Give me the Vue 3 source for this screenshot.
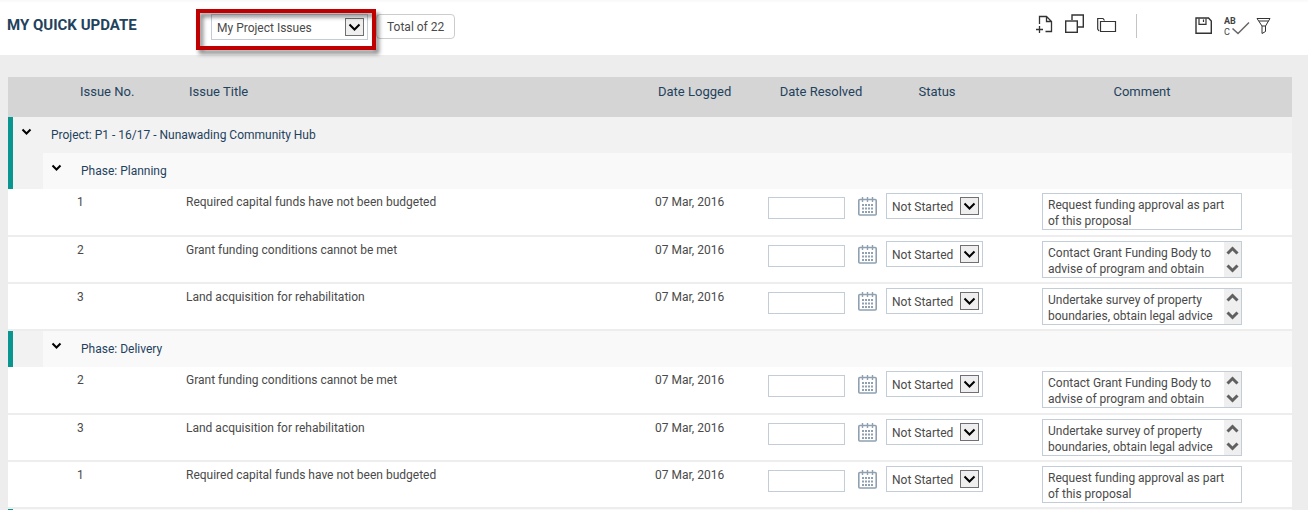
<script setup>
import { reactive, ref } from 'vue'

const view = ref('My Project Issues')

const comments = {
  request: 'Request funding approval as part of this proposal',
  contact: 'Contact Grant Funding Body to advise of program and obtain',
  survey: 'Undertake survey of property boundaries, obtain legal advice',
}

const makeIssue = (id, no, title, comment, scroll) => ({
  id, no, title, logged: '07 Mar, 2016', resolved: '', status: 'Not Started', comment, scroll,
})

const phases = reactive([
  {
    name: 'Planning',
    open: true,
    issues: [
      makeIssue('p1', 1, 'Required capital funds have not been budgeted', comments.request, false),
      makeIssue('p2', 2, 'Grant funding conditions cannot be met', comments.contact, true),
      makeIssue('p3', 3, 'Land acquisition for rehabilitation', comments.survey, true),
    ],
  },
  {
    name: 'Delivery',
    open: true,
    issues: [
      makeIssue('d2', 2, 'Grant funding conditions cannot be met', comments.contact, true),
      makeIssue('d3', 3, 'Land acquisition for rehabilitation', comments.survey, true),
      makeIssue('d1', 1, 'Required capital funds have not been budgeted', comments.request, false),
    ],
  },
])
</script>

<template>
  <div class="page">
    <header class="bar">
      <h1>MY QUICK UPDATE</h1>
      <div class="highlight">
        <div class="picker wide">
          <select v-model="view" aria-label="View">
            <option>My Project Issues</option>
          </select>
          <svg class="drop" viewBox="0 0 17 16"><path d="M3.5 5.5L8.5 10.5L13.5 5.5" /></svg>
        </div>
      </div>
      <span class="total">Total of 22</span>

      <div class="tools">
        <button type="button" class="new" aria-label="New">
          <svg width="18" height="20" viewBox="0 0 18 20">
            <path d="M3.500 9V1.500H10.500L15.500 6.500V16.500H9.500M10.500 1.500V6.500H15.500" stroke-width="1.300" />
            <path d="M0 14.500H7M3.500 11V18" stroke-width="1.300" />
          </svg>
        </button>
        <button type="button" class="copy" aria-label="Copy">
          <svg width="20" height="20" viewBox="0 0 20 20">
            <path d="M7 6V1H18.300V13H13" stroke-width="1.400" />
            <rect x="0.700" y="7" width="11.600" height="11.300" stroke-width="1.400" />
          </svg>
        </button>
        <button type="button" class="folder" aria-label="Open folder">
          <svg width="20" height="16" viewBox="0 0 20 16">
            <path d="M2 14L.7 12V1.500H6L7.500 3.500M3.500 4.500H18.500V14.500H3.500Z" stroke-width="1.200" />
          </svg>
        </button>
        <span class="rule"></span>
        <button type="button" class="save" aria-label="Save">
          <svg width="18" height="18" viewBox="0 0 18 18">
            <path d="M1 1H13.500L16.300 4V16.300H1Z" stroke-width="1.400" />
            <path d="M4 1.500V7.300H11V1.500M8.500 2.500V5" stroke-width="1.200" />
          </svg>
        </button>
        <button type="button" class="spell" aria-label="Check spelling">
          <svg width="26" height="24" viewBox="0 0 26 24">
            <text x="0" y="10">AB</text>
            <text x="0" y="21" class="light">C</text>
            <path d="M8.500 14.500L14 19.500L25 8.500" stroke-width="1.500" />
          </svg>
        </button>
        <button type="button" class="filter" aria-label="Filter">
          <svg width="16" height="18" viewBox="0 0 16 18">
            <path d="M1 1.500H14L9.500 9V14.500L6 16.500V9ZM3 4H12.500M6 9H9.500" />
          </svg>
        </button>
      </div>
    </header>

    <main>
      <table>
        <colgroup>
          <col class="c-mark" /><col class="c-no" /><col /><col class="c-date" />
          <col class="c-resolved" /><col class="c-status" /><col class="c-comment" />
        </colgroup>
        <thead>
          <tr>
            <th></th>
            <th class="no">Issue No.</th>
            <th class="title">Issue Title</th>
            <th class="date">Date Logged</th>
            <th class="mid resolved-head">Date Resolved</th>
            <th class="mid status-head">Status</th>
            <th class="mid">Comment</th>
          </tr>
        </thead>
        <tbody>
          <tr class="project">
            <td class="mark">
              <button type="button" class="toggle" aria-label="Toggle project">
                <svg width="11" height="8" viewBox="0 0 11 8"><path d="M1.500 1.500L5.500 5.500L9.500 1.500" /></svg>
              </button>
            </td>
            <td colspan="6" class="project-name">Project: P1 - 16/17 - Nunawading Community Hub</td>
          </tr>
        </tbody>
        <tbody v-for="phase in phases" :key="phase.name">
          <tr class="phase">
            <td class="mark"></td>
            <td colspan="6">
              <div class="phase-line">
                <button type="button" class="toggle" :aria-label="'Toggle ' + phase.name" @click="phase.open = !phase.open">
                  <svg width="11" height="8" viewBox="0 0 11 8"><path d="M1.500 1.500L5.500 5.500L9.500 1.500" /></svg>
                </button>
                <span>Phase: {{ phase.name }}</span>
              </div>
            </td>
          </tr>
          <template v-if="phase.open">
            <tr v-for="issue in phase.issues" :key="issue.id" class="issue">
              <td></td>
              <td class="no">{{ issue.no }}</td>
              <td class="title">{{ issue.title }}</td>
              <td class="date">{{ issue.logged }}</td>
              <td class="controls">
                <div class="resolved">
                  <input v-model="issue.resolved" type="text" aria-label="Date resolved" />
                  <button type="button" aria-label="Pick a date">
                    <svg width="19" height="19" viewBox="0 0 19 19" class="calendar">
                      <rect x="0.800" y="2.500" width="17.400" height="15.500" rx="1" stroke-width="1.600" />
                      <path d="M4.500 0V5M9.500 0V5M14.500 0V5" stroke-width="1.400" />
                      <path d="M4 8H15M4 11.500H15M4 15H15" stroke-width="2" stroke-dasharray="2 1" />
                    </svg>
                  </button>
                </div>
              </td>
              <td class="controls status">
                <div class="picker">
                  <select v-model="issue.status" aria-label="Status">
                    <option>Not Started</option>
                  </select>
                  <svg class="drop" viewBox="0 0 17 16"><path d="M3.5 5.5L8.5 10.5L13.5 5.5" /></svg>
                </div>
              </td>
              <td class="controls">
                <div class="comment" :class="{ scroll: issue.scroll }">
                  <textarea v-model="issue.comment" aria-label="Comment"></textarea>
                  <div v-if="issue.scroll" class="scroller">
                    <svg width="13" height="9" viewBox="0 0 13 9"><path d="M1.500 7.500L6.500 2.500L11.500 7.500" /></svg>
                    <svg width="13" height="9" viewBox="0 0 13 9"><path d="M1.500 1.500L6.500 6.500L11.500 1.500" /></svg>
                  </div>
                </div>
              </td>
            </tr>
          </template>
        </tbody>
        <tbody>
          <tr class="next"><td class="mark"></td><td colspan="6"></td></tr>
        </tbody>
      </table>
    </main>
  </div>
</template>

<style>
html,
body {
  margin: 0;
  background: #ededed;
}
</style>

<style scoped>
.page {
  font: 12px/16px Roboto, "Liberation Sans", sans-serif;
  color: #4a4a4a;
}
.page * {
  box-sizing: border-box;
}
button {
  padding: 0;
  border: 0;
  background: none;
  display: block;
  cursor: pointer;
}
svg {
  display: block;
  fill: none;
  stroke: #333;
}
.bar {
  display: flex;
  align-items: flex-start;
  height: 55px;
  padding-left: 7px;
  background: linear-gradient(#f8f8f8, #fff 3px);
}
h1 {
  width: 189px;
  margin: 16px 0 0;
  font-size: 15px;
  line-height: 18px;
  font-weight: 700;
  color: #1f425d;
  white-space: nowrap;
}
.highlight {
  position: relative;
  width: 180px;
  margin-top: 9px;
  padding: 5px 8px 10px 15px;
}
.highlight::after {
  content: "";
  position: absolute;
  inset: 0;
  border: 4px solid #c00000;
  filter: drop-shadow(3px 4px 2px rgba(0, 0, 0, 0.5));
  pointer-events: none;
}
.picker {
  position: relative;
  width: 97px;
  height: 26px;
}
.picker.wide {
  width: auto;
}
.picker select {
  appearance: none;
  display: block;
  width: 100%;
  height: 100%;
  padding: 1px 0 0 5px;
  border: 1px solid #c3cdd8;
  border-radius: 0;
  background: #fff;
  font: inherit;
  color: inherit;
}
.drop {
  position: absolute;
  right: 4px;
  top: 4px;
  width: 19px;
  height: 18px;
  background: #efefef;
  border: 1px solid #707070;
  stroke: #000;
  stroke-width: 2;
  pointer-events: none;
}
.total {
  height: 25px;
  margin-top: 14px;
  padding: 0 10px;
  border: 1px solid #ccc;
  border-radius: 4px;
  line-height: 24px;
}
.tools {
  display: flex;
  align-items: flex-start;
  margin-left: auto;
  padding: 14px 36px 0 0;
}
.new {
  margin: 1px 11px 0 0;
}
.copy {
  margin-right: 12px;
}
.folder {
  margin: 3px 19px 0 0;
}
.rule {
  width: 1px;
  height: 24px;
  margin-right: 58px;
  background: #c4c4c4;
}
.save {
  margin: 3px 11px 0 0;
}
.spell {
  margin-right: 6px;
}
.spell text {
  font: 700 9px Roboto, "Liberation Sans", sans-serif;
  fill: #444;
  stroke: none;
}
.spell .light {
  font-weight: 400;
}
.spell path {
  stroke: #666;
}
.filter {
  margin-top: 3px;
}
main {
  padding: 22px 16px 0 8px;
}
table {
  width: 100%;
  table-layout: fixed;
  border-collapse: separate;
  border-spacing: 0;
}
.c-mark { width: 35px; }
.c-no { width: 140px; }
.c-date { width: 100px; }
.c-resolved { width: 132px; }
.c-status { width: 108px; }
.c-comment { width: 300px; }
th,
td {
  padding: 0;
  text-align: left;
  vertical-align: top;
  font-weight: 400;
}
th {
  height: 40px;
  padding-top: 7px;
  background: #d5d5d5;
  font-size: 13px;
  color: #1f425d;
}
th.no { padding-left: 37px; }
th.title,
th.date { padding-left: 6px; }
th.mid { text-align: center; }
th.resolved-head { padding-left: 6px; }
th.status-head { padding-right: 2px; }
.project td,
.phase td {
  height: 36px;
  background: #f2f2f2;
  color: #1f425d;
}
.phase td:last-child {
  background: #f9f9f9;
}
td.mark,
.phase td.mark {
  border-left: 5px solid #0a9690;
  background: #f2f2f2;
}
.mark .toggle {
  margin: 11px 0 0 8px;
}
.toggle svg {
  stroke: #000;
  stroke-width: 2;
}
.project-name {
  padding: 10px 0 0 8px;
}
.phase-line {
  display: flex;
  align-items: flex-start;
  gap: 19px;
  padding: 10px 0 0 8px;
}
.phase-line .toggle {
  margin-top: 1px;
}
.issue td {
  height: 47px;
  padding-top: 5px;
  border-bottom: 2px solid #ededed;
  background: #fff;
}
.issue td.controls {
  padding-top: 4px;
}
.issue:nth-child(2) td {
  height: 48px;
}
.issue td.no { padding-left: 34px; }
.issue td.title,
.issue td.date { padding-left: 3px; }
.resolved {
  display: flex;
  align-items: flex-start;
  gap: 13px;
  padding: 4px 0 0 16px;
}
.resolved input {
  width: 77px;
  height: 22px;
  padding: 0 4px;
  border: 1px solid #c3cdd8;
  font: inherit;
}
.calendar {
  stroke: #8fa1b1;
}
.issue td.status {
  padding-left: 2px;
}
.comment {
  position: relative;
  width: 200px;
  margin: 0 auto;
}
.comment textarea {
  display: block;
  width: 100%;
  height: 37px;
  padding: 3px 5px 0;
  border: 1px solid #c3cdd8;
  background: #fff;
  overflow: hidden;
  resize: none;
  font: inherit;
  color: inherit;
}
.scroll textarea {
  padding-right: 20px;
}
.scroller {
  position: absolute;
  top: 1px;
  right: 1px;
  bottom: 1px;
  width: 17px;
  display: flex;
  flex-direction: column;
  align-items: center;
  justify-content: space-between;
  padding: 4px 0;
  background: #efefef;
}
.scroller svg {
  stroke: #606060;
  stroke-width: 3;
}
.next td {
  height: 1px;
  background: #f9f9f9;
}
</style>
